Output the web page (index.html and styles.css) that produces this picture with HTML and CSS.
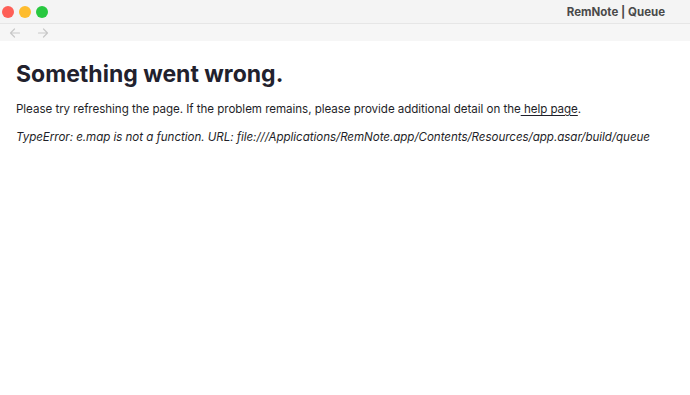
FILE: index.html
```html
<!DOCTYPE html>
<html lang="en">
<head>
  <meta charset="UTF-8" />
  <title>RemNote | Queue</title>
  <link rel="stylesheet" href="styles.css">
</head>
<body>
  <div class="titlebar">
    <div class="lights">
      <span class="light red"></span>
      <span class="light yellow"></span>
      <span class="light green"></span>
    </div>
    <div class="title">RemNote | Queue</div>
  </div>
  <div class="navbar">
    <svg class="nav-icon" width="12" height="12" viewBox="0 0 12 12"><path d="M10.5 6H1.5M5.5 2L1.5 6L5.5 10" fill="none" stroke="#c8c8c8" stroke-width="1.2" stroke-linecap="round" stroke-linejoin="round"/></svg>
    <svg class="nav-icon" width="12" height="12" viewBox="0 0 12 12"><path d="M1.5 6H10.5M6.5 2L10.5 6L6.5 10" fill="none" stroke="#c8c8c8" stroke-width="1.2" stroke-linecap="round" stroke-linejoin="round"/></svg>
  </div>
  <main class="error">
    <h1>Something went wrong.</h1>
    <p>Please try refreshing the page. If the problem remains, please provide additional detail on the<a href="#"> help page</a>.</p>
    <p class="trace">TypeError: e.map is not a function. URL: file:///Applications/RemNote.app/Contents/Resources/app.asar/build/queue</p>
  </main>
</body>
</html>
```

FILE: styles.css
```css
body {
  margin: 0;
  background-color: #fff;
  font-family: Inter, 'Noto Sans', sans-serif;
  color: #1f1f29;
}
.titlebar {
  height: 23px;
  background-color: #f4f4f4;
  border-bottom: 1px solid #e6e6e6;
  display: flex;
  align-items: center;
  justify-content: space-between;
  padding: 0 25px 0 2px;
}
.lights {
  display: flex;
  gap: 5px;
}
.light {
  width: 12px;
  height: 12px;
  border-radius: 50%;
}
.red { background-color: #fe5f57; }
.yellow { background-color: #febc2e; }
.green { background-color: #28c840; }
.title {
  font-size: 11.5px;
  font-weight: 700;
  color: #4a4a4a;
}
.navbar {
  height: 17px;
  background-color: #f6f6f6;
  display: flex;
  align-items: center;
  gap: 16px;
  padding-left: 9px;
}
.error {
  padding: 19px 16px;
}
h1 {
  font-size: 23px;
  font-weight: 700;
  margin: 0 0 13px;
  color: #22212d;
}
p {
  font-size: 11.6px;
  letter-spacing: -0.05px;
  margin: 0 0 12px;
  line-height: 16px;
}
a {
  color: inherit;
  text-decoration: underline;
  text-underline-offset: 2px;
}
.trace {
  font-style: italic;
}
```
